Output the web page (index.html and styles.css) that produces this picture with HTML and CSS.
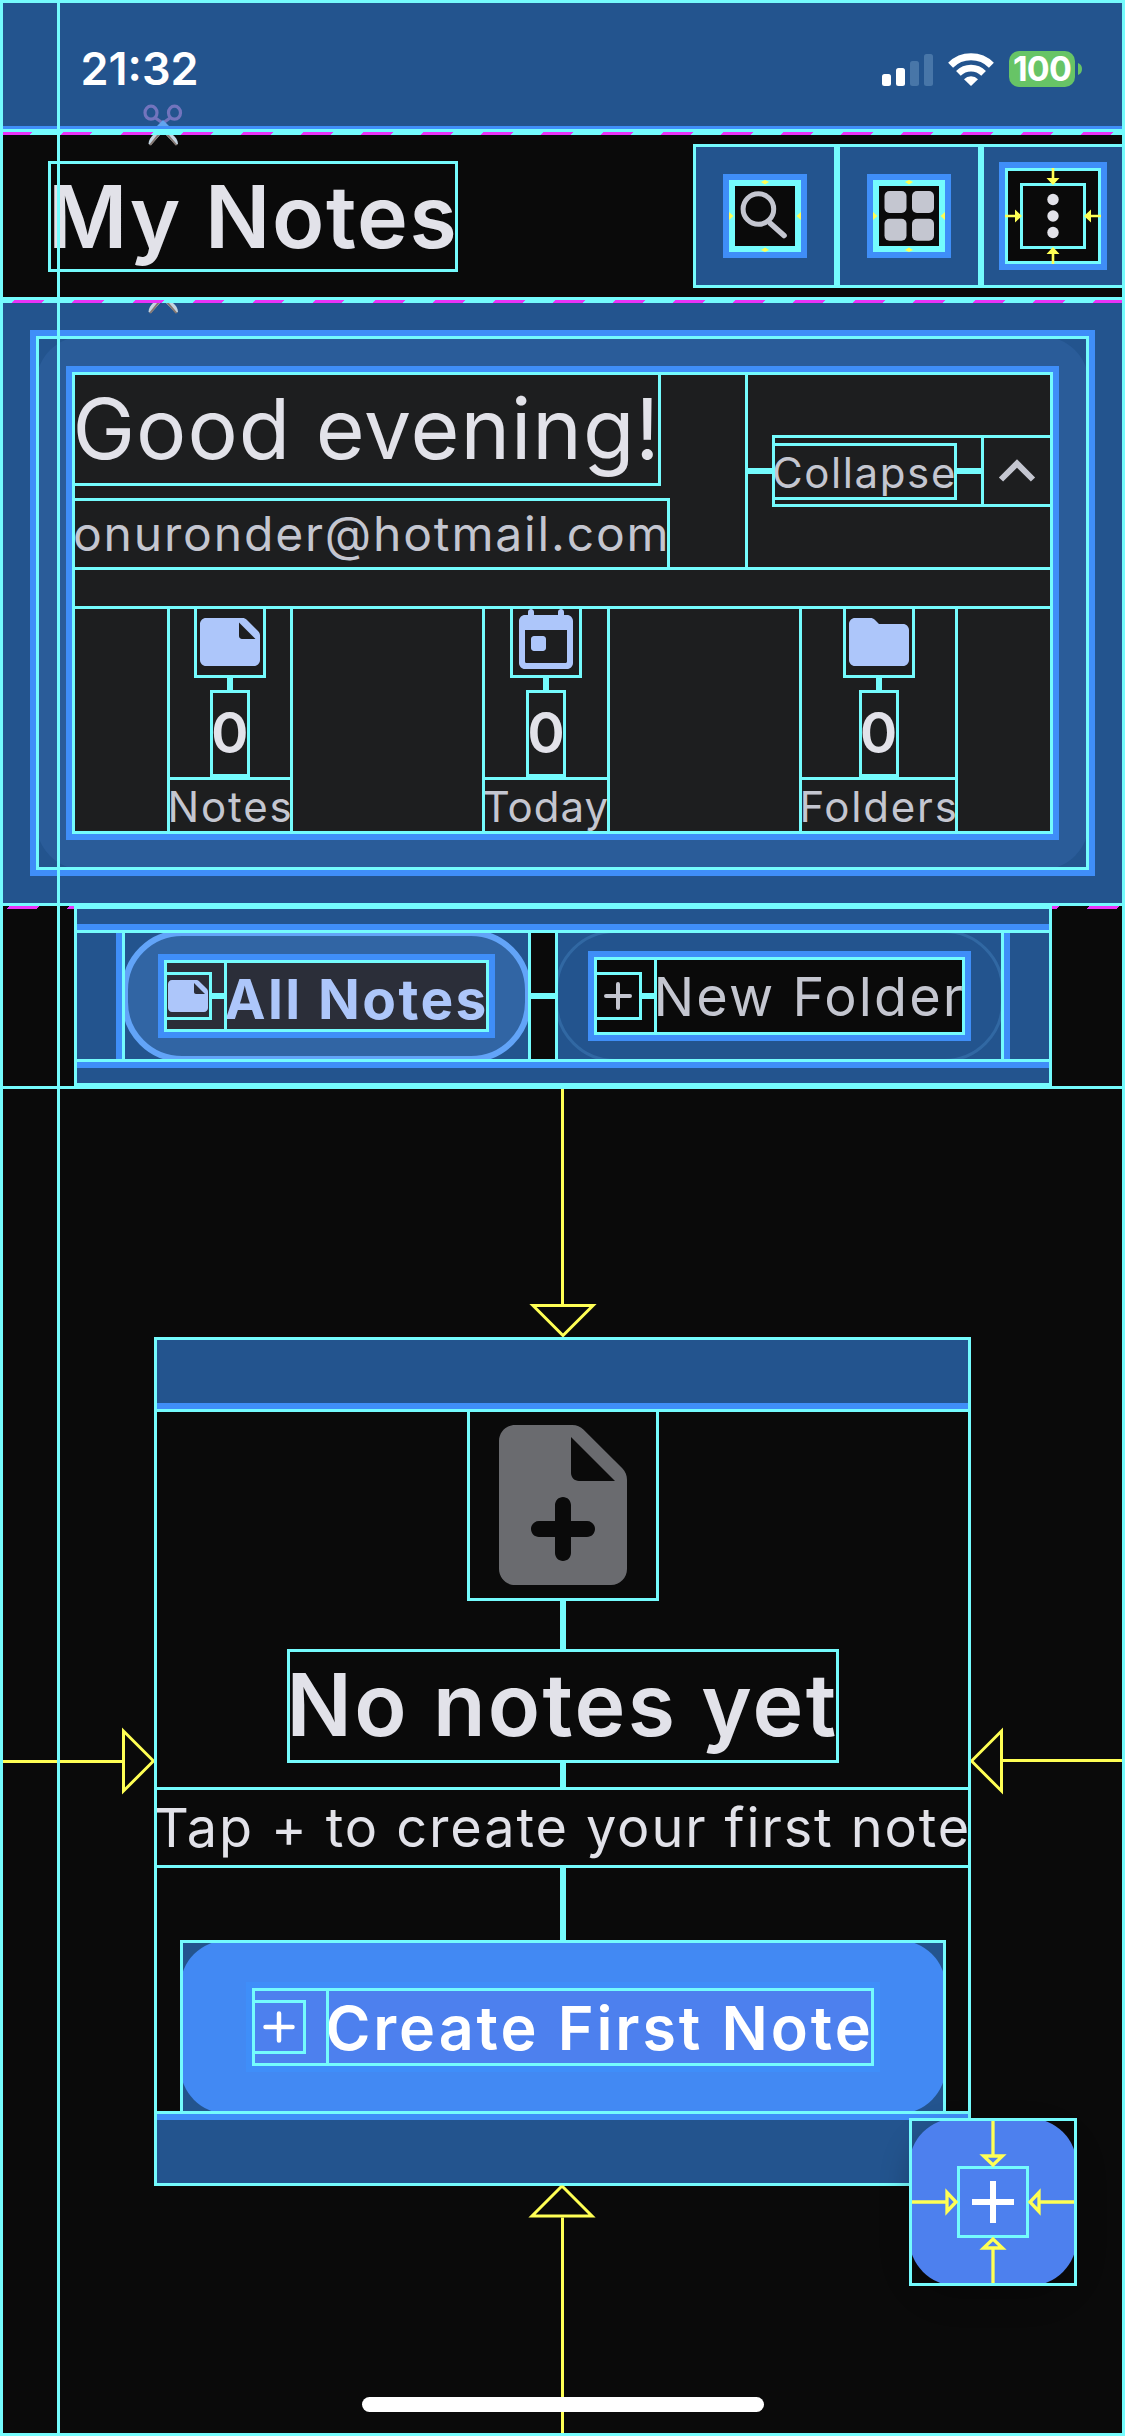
FILE: index.html
```html
<!DOCTYPE html>
<html lang="en">
<head>
<meta charset="utf-8">
<title>My Notes</title>
<link rel="stylesheet" href="styles.css">
</head>
<body>
<div class="screen">

  <header class="status-bar">
    <span class="clock">21:32</span>
    <div class="status-icons">
      <svg class="signal" width="51" height="33" viewBox="0 0 51 33">
        <rect x="0" y="21" width="9" height="12" rx="2.5" fill="#fff"/>
        <rect x="14" y="15" width="9" height="18" rx="2.5" fill="#fff"/>
        <rect x="28" y="8" width="9" height="25" rx="2.5" fill="#4876a8"/>
        <rect x="42" y="1" width="9" height="32" rx="2.5" fill="#4876a8"/>
      </svg>
      <svg class="wifi" width="46" height="34" viewBox="0 0 46 34" fill="none" stroke="#fff">
        <path d="M2.6 13.2A29 29 0 0 1 43.4 13.2" stroke-width="7"/>
        <path d="M10.4 21.4A17.8 17.8 0 0 1 35.6 21.4" stroke-width="6.6"/>
        <path d="M16 27.2A10 10 0 0 1 30 27.2L23 34Z" fill="#fff" stroke="none"/>
      </svg>
      <div class="battery">100</div>
      <svg class="battery-tip" width="4" height="12" viewBox="0 0 4 12"><path d="M0 0C2.6 1 4 3.200 4 6S2.600 11 0 12Z" fill="#67c466"/></svg>
    </div>
  </header>

  <div class="app-bar">
    <h1 class="text box page-title">My Notes</h1>
    <div class="actions">
      <div class="action box">
        <div class="action-icon">
          <svg width="72" height="72" viewBox="0 0 72 72">
            <g fill="none" stroke="#c4c6d0"><circle cx="29.400" cy="29" r="15.300" stroke-width="5"/><path d="M41.500 43.500L55 55.500" stroke-width="5.600" stroke-linecap="round"/></g>
            <g fill="#ffff54"><path d="M32 2l4-2 4 2-4 2.500zM32 70l4-2.500 4 2.500-4 2zM0 32l4.500 4-4.500 4zM72 32l-4.500 4 4.500 4z"/></g>
          </svg>
        </div>
      </div>
      <div class="action box">
        <div class="action-icon">
          <svg width="72" height="72" viewBox="0 0 72 72">
            <g fill="#c4c6d0"><rect x="11.500" y="11" width="22" height="22" rx="5"/><rect x="39" y="11" width="22" height="22" rx="5"/><rect x="11.500" y="38.700" width="22" height="22" rx="5"/><rect x="39" y="38.700" width="22" height="22" rx="5"/></g>
            <g fill="#ffff54"><path d="M32 2l4-2 4 2-4 2.500zM32 70l4-2.500 4 2.500-4 2zM0 32l4.500 4-4.500 4zM72 32l-4.500 4 4.500 4z"/></g>
          </svg>
        </div>
      </div>
      <div class="action box">
        <div class="action-menu">
          <svg width="96" height="96" viewBox="0 0 96 96">
            <rect x="16.500" y="16.500" width="63" height="69" fill="none" stroke="none"/>
            <rect x="16.500" y="16.500" width="63" height="63" fill="none" stroke="#74fbfd" stroke-width="3"/>
            <g fill="#e2e2e9"><circle cx="48" cy="31.500" r="5.700"/><circle cx="48" cy="48" r="5.700"/><circle cx="48" cy="64.500" r="5.700"/></g>
            <g fill="#ffff54"><path d="M46.700 0h2.600v10h5.200L48 17l-6.500-7h5.200zM46.700 96h2.600V86h5.200L48 79l-6.500 7h5.200zM0 46.700v2.600h10v5.200l7-6.500-7-6.500v5.200zM96 46.700v2.600H86v5.200L79 48l7-6.500v5.200z"/></g>
          </svg>
        </div>
      </div>
    </div>
  </div>

  <section class="overview">
    <div class="card-box box">
      <div class="card">
        <div class="card-content box">
          <div class="greeting">
            <div class="greeting-text box">
              <div class="text box hello">Good evening!</div>
              <div class="text box email">onuronder@hotmail.com</div>
            </div>
            <i class="bar-h"></i>
            <div class="collapse box">
              <span class="text box collapse-label">Collapse</span>
              <i class="bar-h"></i>
              <div class="collapse-icon box"><svg width="72" height="72" viewBox="0 0 72 72"><path d="M20 44.500L36 28.500 52 44.500" fill="none" stroke="#c4c6d0" stroke-width="6"/></svg></div>
            </div>
          </div>
          <div class="stats box">
            <div class="stat box stat-notes">
              <div class="stat-icon box"><svg width="72" height="72" viewBox="0 0 24 24" fill="#adc6fa"><path d="M21.410 8.410l-3.830-3.830C17.210 4.210 16.700 4 16.170 4H4c-1.100 0-2 .9-2 2v12c0 1.100.9 2 2 2h16c1.100 0 2-.9 2-2V9.830c0-.53-.21-1.040-.59-1.420zM15 5.500l5.500 5.500H16c-.55 0-1-.45-1-1V5.500z"/></svg></div>
              <i class="bar-v"></i>
              <div class="text box count">0</div>
              <div class="text box label">Notes</div>
            </div>
            <div class="stat box stat-today">
              <div class="stat-icon box"><svg width="72" height="72" viewBox="0 0 24 24" fill="#adc6fa"><path d="M19 3h-1V2c0-.55-.45-1-1-1s-1 .45-1 1v1H8V2c0-.55-.45-1-1-1s-1 .45-1 1v1H5c-1.100 0-2 .9-2 2v14c0 1.100.9 2 2 2h14c1.100 0 2-.9 2-2V5c0-1.100-.9-2-2-2zm0 15.500c0 .28-.22.5-.5.5h-13a.5.5 0 0 1-.5-.5V8h14zM8 10h3c.55 0 1 .45 1 1v3c0 .55-.45 1-1 1H8c-.55 0-1-.45-1-1v-3c0-.55.45-1 1-1z"/></svg></div>
              <i class="bar-v"></i>
              <div class="text box count">0</div>
              <div class="text box label">Today</div>
            </div>
            <div class="stat box stat-folders">
              <div class="stat-icon box"><svg width="72" height="72" viewBox="0 0 24 24" fill="#adc6fa"><path d="M10.590 4.590C10.210 4.210 9.700 4 9.170 4H4c-1.100 0-2 .9-2 2v12c0 1.100.9 2 2 2h16c1.100 0 2-.9 2-2V8c0-1.100-.9-2-2-2h-8l-1.410-1.410z"/></svg></div>
              <i class="bar-v"></i>
              <div class="text box count">0</div>
              <div class="text box label">Folders</div>
            </div>
          </div>
        </div>
      </div>
    </div>
  </section>

  <nav class="tabs">
    <div class="tabs-pad box">
      <div class="tabs-row box">
        <div class="chips">
          <div class="chip box">
            <div class="pill pill-active">
              <div class="chip-content box">
                <div class="chip-icon box"><svg width="48" height="48" viewBox="0 0 24 24" fill="#adc6fa"><path d="M21.410 8.410l-3.830-3.830C17.210 4.210 16.700 4 16.170 4H4c-1.100 0-2 .9-2 2v12c0 1.100.9 2 2 2h16c1.100 0 2-.9 2-2V9.830c0-.53-.21-1.040-.59-1.420zM15 5.500l5.500 5.500H16c-.55 0-1-.45-1-1V5.500z"/></svg></div>
                <i class="bar-h bar-short"></i>
                <span class="text box all-notes">All Notes</span>
              </div>
            </div>
          </div>
          <i class="bar-h"></i>
          <div class="chip box">
            <div class="pill">
              <div class="chip-content box">
                <div class="chip-icon box"><svg width="48" height="48" viewBox="0 0 48 48"><path d="M24 12v24M12 24h24" stroke="#c4c6d0" stroke-width="4" stroke-linecap="round"/></svg></div>
                <i class="bar-h bar-short"></i>
                <span class="text box new-folder">New Folder</span>
              </div>
            </div>
          </div>
        </div>
      </div>
    </div>
  </nav>

  <main class="content">
    <div class="arrow-v"><svg width="72" height="36" viewBox="0 0 72 36"><path d="M6 4.500H66L36 34.500Z" fill="none" stroke="#ffff54" stroke-width="3"/></svg></div>
    <div class="content-middle">
      <div class="arrow-h"><svg width="36" height="72" viewBox="0 0 36 72"><path d="M5.500 6V66L35.500 36Z" fill="none" stroke="#ffff54" stroke-width="3"/></svg></div>
      <div class="empty box">
        <div class="empty-inner box">
          <div class="empty-icon box"><svg width="192" height="192" viewBox="0 0 24 24" fill="#6a6b6f"><path d="M19.410 7.410l-4.830-4.830C14.210 2.210 13.700 2 13.170 2H6c-1.100 0-2 .9-2 2v16c0 1.100.9 2 2 2h12c1.100 0 2-.9 2-2V8.830c0-.53-.21-1.040-.59-1.420zM15 16h-2v2c0 .55-.45 1-1 1s-1-.45-1-1v-2H9c-.55 0-1-.45-1-1s.45-1 1-1h2v-2c0-.55.450-1 1-1s1 .45 1 1v2h2c.55 0 1 .45 1 1s-.45 1-1 1zM14 9c-.55 0-1-.45-1-1V3.500L18.500 9z"/></svg></div>
          <i class="bar-v gap-48"></i>
          <h2 class="text box empty-title">No notes yet</h2>
          <i class="bar-v gap-24"></i>
          <p class="text box empty-hint">Tap + to create your first note</p>
          <i class="bar-v gap-72"></i>
          <div class="create box">
            <div class="create-button">
              <div class="create-content box">
                <div class="create-icon box"><svg width="54" height="54" viewBox="0 0 54 54"><path d="M27 13.500v27M13.500 27h27" stroke="#fff" stroke-width="4.500" stroke-linecap="round"/></svg></div>
                <span class="text box create-label">Create First Note</span>
              </div>
            </div>
          </div>
        </div>
      </div>
      <div class="arrow-h arrow-left"><svg width="36" height="72" viewBox="0 0 36 72"><path d="M5.500 6V66L35.500 36Z" fill="none" stroke="#ffff54" stroke-width="3"/></svg></div>
    </div>
    <div class="arrow-v arrow-up"><svg width="72" height="36" viewBox="0 0 72 36"><path d="M6 5.500H66L36 35.500Z" fill="none" stroke="#ffff54" stroke-width="3"/></svg></div>
  </main>

  <div class="fab">
    <svg width="168" height="168" viewBox="0 0 168 168">
      <rect width="168" height="168" rx="48" fill="#4d80ee"/>
      <path d="M84 63v42M63 84h42" stroke="#fff" stroke-width="6"/>
      <g fill="none" stroke="#74fbfd" stroke-width="3"><rect x="1.500" y="1.500" width="165" height="165"/><rect x="49.500" y="49.500" width="69" height="69"/></g>
      <g fill="none" stroke="#ffff54" stroke-width="3.300">
        <path d="M84 3v34M74.500 38h19L84 47ZM84 165v-34M74.500 130h19L84 121ZM3 84h34M38 74.500v19L47 84ZM165 84h-34M130 74.500v19L121 84Z"/>
      </g>
    </svg>
  </div>

  <svg class="scissors scissors-top" width="48" height="48" viewBox="0 0 48 48">
    <g fill="none" stroke="#7274bd" stroke-width="3.200"><ellipse cx="11" cy="12.700" rx="6" ry="6.500"/><ellipse cx="34.500" cy="12.700" rx="6" ry="6.500"/><path d="M15.500 18l7 5M30 18l-7 5"/></g>
    <path d="M17 26l6-6 6 6z" fill="#62a4ee"/>
    <path d="M13 35h7l-9 10-2.500-1c0-4 2.500-7 4.500-9zM26 35h7c2.500 2 5 5 5 9l-2 1z" fill="#c3d3e0"/>
    <path d="M17 35h2.500L11 45.500 9 45zM26.500 35H29l8.500 10-2 .5z" fill="#857872"/>
  </svg>
  <svg class="scissors scissors-low" width="48" height="12" viewBox="0 34 48 12">
    <path d="M13 35h7l-9 10-2.500-1c0-4 2.500-7 4.500-9zM26 35h7c2.500 2 5 5 5 9l-2 1z" fill="#c3d3e0"/>
    <path d="M17 35h2.500L11 45.500 9 45zM26.500 35H29l8.500 10-2 .5z" fill="#857872"/>
  </svg>
  <div class="home-indicator"></div>
  <div class="edge-guide"></div>
  <div class="screen-guide"></div>
</div>
</body>
</html>
```
FILE: styles.css
```css
:root {
  --line: #74fbfd;
  --pad: #23548e;
  --pad-edge: #3f8ef8;
  --black: #0a0a0a;
  --arrow: #ffff54;
  --mark: #ea33f7;
  --text: #e2e2e9;
  --muted: #c4c6d0;
}

* { box-sizing: border-box; }

body {
  margin: 0;
  background: var(--black);
  color: var(--text);
  font-family: "Inter", "Liberation Sans", sans-serif;
}

h1, h2, p { margin: 0; font-weight: inherit; }
i { display: block; flex: none; }
svg { display: block; flex: none; }

.screen {
  position: relative;
  width: 1125px;
  height: 2436px;
  overflow: hidden;
  display: flex;
  flex-direction: column;
  background: var(--black);
}

.box { outline: 3px solid var(--line); outline-offset: -3px; flex: none; }
.text { display: block; white-space: nowrap; text-align: left; }

/* spacers between children */
.bar-h { width: 24px; height: 6px; background: var(--line); }
.bar-short { width: 12px; }
.bar-v { width: 6px; height: 12px; background: var(--line); }
.gap-48 { height: 48px; }
.gap-24 { height: 24px; }
.gap-72 { height: 72px; }

/* status bar */
.status-bar {
  height: 132px;
  flex: none;
  display: flex;
  justify-content: space-between;
  align-items: flex-start;
  padding: 41px 43px 0 80.5px;
  background: var(--pad);
  border-bottom: 3px solid var(--line);
  box-shadow: inset 0 -3px var(--pad-edge);
}
.clock { color: #fff; font-size: 45px; font-weight: 600; line-height: 56px; }
.status-icons { display: flex; align-items: center; height: 36px; margin-top: 10px; }
.signal { margin-right: 15px; }
.wifi { margin-right: 15px; }
.battery {
  width: 66px;
  height: 36px;
  margin-right: 3px;
  border-radius: 10px;
  background: #67c466;
  color: #fff;
  font-size: 34px;
  font-weight: 700;
  line-height: 36px;
  text-align: center;
  letter-spacing: -0.8px;
}

/* app bar */
.app-bar {
  height: 168px;
  flex: none;
  display: flex;
  justify-content: space-between;
  align-items: center;
  padding: 3px 0 0 48px;
  border-bottom: 3px solid var(--line);
  background:
    repeating-linear-gradient(135deg, transparent 0 2.12px, var(--mark) 2.12px 23.33px, transparent 23.33px 42.43px) 0 0 / 100% 3px no-repeat,
    linear-gradient(var(--line), var(--line)) 0 0 / 100% 3px no-repeat,
    var(--black);
}
.page-title {
  width: 410px;
  height: 111px;
  padding-top: 1px;
  font-size: 86px;
  font-weight: 600;
  line-height: 111px;
  letter-spacing: 1.6px;
}
.actions { display: flex; align-items: center; }
.action {
  width: 144px;
  height: 144px;
  display: flex;
  align-items: center;
  justify-content: center;
  background: var(--pad);
}
.action-icon { background: var(--black); box-shadow: 0 0 0 6px var(--pad-edge), inset 0 0 0 6px var(--line); }
.action-menu { background: var(--black); box-shadow: 0 0 0 6px var(--pad-edge), inset 0 0 0 3px var(--line); }

/* greeting card */
.overview {
  height: 606px;
  flex: none;
  padding: 36px;
  border-bottom: 3px solid var(--line);
  background:
    repeating-linear-gradient(135deg, transparent 0 10.6px, var(--mark) 10.6px 31.8px, transparent 31.8px 42.43px) 0 0 / 100% 3px no-repeat,
    linear-gradient(var(--line), var(--line)) 0 0 / 100% 3px no-repeat,
    var(--pad);
}
.card-box { height: 534px; background: var(--pad); box-shadow: 0 0 0 6px var(--pad-edge); }
.card { height: 534px; padding: 36px; border-radius: 48px; background: #2a5c99; }
.card-content {
  height: 462px;
  display: flex;
  flex-direction: column;
  justify-content: space-between;
  background: #1d1e1f;
  box-shadow: 0 0 0 6px var(--pad-edge);
}
.greeting { height: 198px; display: flex; align-items: center; outline: 3px solid var(--line); outline-offset: -3px; }
.greeting-text { width: 675.5px; height: 198px; display: flex; flex-direction: column; justify-content: space-between; }
.hello { width: 588.5px; height: 114px; padding-left: 0.5px; font-size: 84px; line-height: 113px; letter-spacing: 0.95px; }
.email { width: 597.5px; height: 72px; padding-left: 1px; font-size: 48px; line-height: 72px; letter-spacing: 1.83px; color: var(--muted); }
.collapse { width: 281.5px; height: 72px; display: flex; align-items: center; }
.collapse-label {
  width: 185.5px;
  height: 57px;
  padding: 1px 0 0 0.5px;
  font-size: 42px;
  line-height: 57px;
  letter-spacing: 1.6px;
  color: var(--muted);
}

.stats { height: 228px; display: flex; justify-content: space-around; }
.stat { display: flex; flex-direction: column; align-items: center; }
.stat-notes { width: 126.5px; }
.stat-today { width: 127.5px; }
.stat-folders { width: 159.5px; }
.count { width: 40px; height: 87px; font-size: 57px; font-weight: 600; line-height: 86px; text-align: center; }
.label { width: 100%; height: 57px; padding: 1px 0 0 0.5px; font-size: 42px; line-height: 57px; letter-spacing: 1.8px; color: var(--muted); }
.stat-notes .label { padding-left: 1px; }
.stat-today .label { letter-spacing: 1px; }

/* folder tabs */
.tabs {
  height: 180px;
  flex: none;
  display: flex;
  justify-content: center;
  background: repeating-linear-gradient(135deg, transparent 0 6.4px, var(--mark) 6.4px 27.6px, transparent 27.6px 42.43px) 0 0 / 100% 3px no-repeat;
}
.tabs-pad { width: 978px; padding: 24px 0; background: var(--pad); }
.tabs-row { height: 132px; padding: 0 48px; box-shadow: 0 -6px var(--pad-edge), 0 6px var(--pad-edge); }
.chips {
  height: 132px;
  display: flex;
  align-items: center;
  background: var(--black);
  box-shadow: -6px 0 var(--pad-edge), 6px 0 var(--pad-edge);
}
.chip { height: 132px; background: var(--pad); }
.pill { height: 132px; display: flex; align-items: center; padding: 0 36px; border: 3px solid #3168a3; border-radius: 60px; }
.pill-active { border: 6px solid #62a4f8; background: #3165a4; }
.chip-content { display: flex; align-items: center; background: var(--black); box-shadow: 0 0 0 6px var(--pad-edge); }
.pill-active .chip-content { background: #2b2e39; }
.all-notes {
  width: 265px;
  height: 72px;
  padding: 3px 0 0 1px;
  font-size: 55px;
  font-weight: 700;
  line-height: 72px;
  letter-spacing: 2.4px;
  color: #adc6fa;
}
.new-folder {
  width: 311px;
  height: 78px;
  padding-top: 1px;
  font-size: 54px;
  line-height: 78px;
  letter-spacing: 2.1px;
  color: var(--muted);
}

/* empty state */
.content {
  height: 1350px;
  flex: none;
  display: flex;
  flex-direction: column;
  border-top: 3px solid var(--line);
}
.content-middle { height: 849px; flex: none; display: flex; align-items: center; }
.arrow-v {
  height: 247.5px;
  flex: none;
  display: flex;
  align-items: flex-end;
  justify-content: center;
  background: linear-gradient(var(--arrow), var(--arrow)) 561px 0 / 3px calc(100% - 32px) no-repeat;
}
.arrow-up { height: 250.5px; transform: rotate(180deg); background-position: 561px 0; }
.arrow-h {
  flex: 1;
  height: 72px;
  display: flex;
  justify-content: flex-end;
  background: linear-gradient(var(--arrow), var(--arrow)) 0 50% / calc(100% - 32px) 3px no-repeat;
}
.arrow-left { transform: rotate(180deg); }
.empty { width: 817px; height: 849px; padding: 72px 0; background: var(--pad); }
.empty-inner {
  height: 705px;
  display: flex;
  flex-direction: column;
  align-items: center;
  background: var(--black);
  box-shadow: 0 -6px var(--pad-edge), 0 6px var(--pad-edge);
}
.empty-title {
  width: 552px;
  height: 114px;
  font-size: 86px;
  font-weight: 600;
  line-height: 113px;
  letter-spacing: 2.35px;
}
.empty-hint { width: 817px; height: 81px; font-size: 54px; line-height: 81px; letter-spacing: 1.9px; }
.create { width: 766px; height: 174px; background: var(--pad); }
.create-button {
  height: 174px;
  display: flex;
  align-items: center;
  justify-content: center;
  border-radius: 48px;
  background: #4289f3;
}
.create-content {
  width: 622px;
  height: 78px;
  display: flex;
  align-items: center;
  justify-content: space-between;
  background: #4d80ee;
  box-shadow: 0 0 0 6px #3f8ef9;
}
.create-label {
  width: 548px;
  height: 78px;
  padding-top: 1px;
  font-size: 61px;
  font-weight: 600;
  line-height: 78px;
  letter-spacing: 2.9px;
  color: #fff;
}

/* overlays */
.fab {
  position: absolute;
  left: 909px;
  top: 2118px;
  border-radius: 48px;
  box-shadow: 0 12px 30px rgba(0, 0, 0, 0.22);
}
.scissors { position: absolute; left: 140px; }
.scissors-top { top: 100px; clip-path: polygon(0 0, 100% 0, 100% 26px, 0 26px, 0 35px, 100% 35px, 100% 100%, 0 100%, 0 0); }
.scissors-low { top: 302px; clip-path: inset(1px 0 0 0); }
.home-indicator {
  position: absolute;
  left: 362px;
  bottom: 24px;
  width: 402px;
  height: 15px;
  border-radius: 8px;
  background: #fff;
}
.edge-guide { position: absolute; left: 0; top: 0; width: 60px; height: 100%; border-right: 3px solid var(--line); }
.screen-guide { position: absolute; inset: 0; border: 3px solid var(--line); }
```
